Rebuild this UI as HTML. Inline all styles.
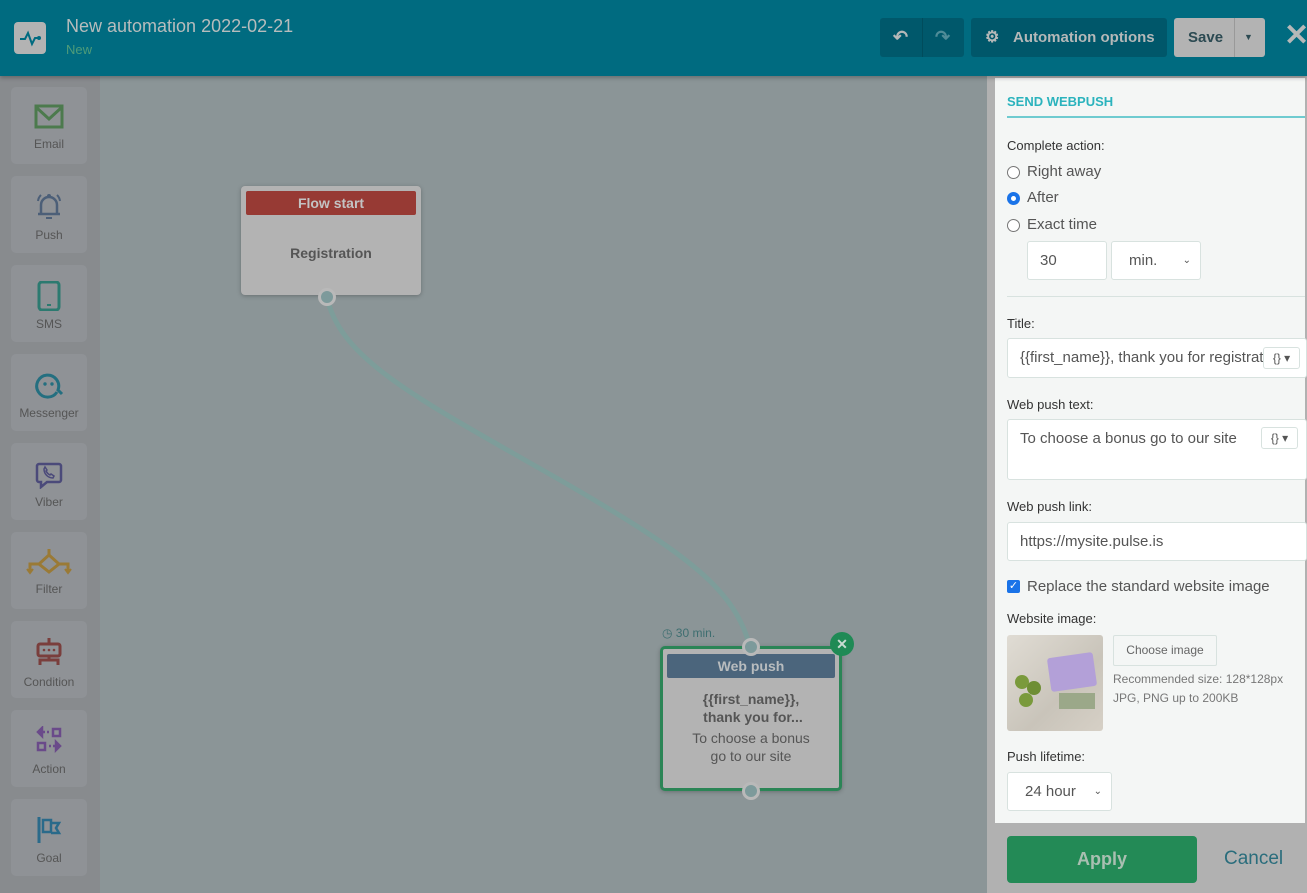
<!DOCTYPE html>
<html><head><meta charset="utf-8"><style>
*{box-sizing:border-box;margin:0;padding:0}
body{width:1307px;height:893px;overflow:hidden;font-family:"Liberation Sans",sans-serif;background:#8b9597;position:relative}
.hdr{position:absolute;left:0;top:0;width:1307px;height:76px;background:#006b80;box-shadow:0 2px 4px rgba(0,0,0,.25);z-index:5}
.logo{position:absolute;left:14px;top:22px;width:32px;height:32px;background:#b3b3b3;border-radius:4px}
.ttl{position:absolute;left:66px;top:16px;font-size:18px;color:#b7bcbc}
.sub{position:absolute;left:66px;top:42px;font-size:13px;color:#4f9c79}
.btn{position:absolute;top:18px;height:39px;border-radius:3px;background:#00576a;color:#b5b8b8;font-weight:bold;font-size:15px;line-height:39px}
.side{position:absolute;left:0;top:76px;width:100px;height:817px;background:#888b8e}
.tile{position:absolute;left:11px;width:76px;height:77px;background:#8f9296;border-radius:5px;text-align:center;font-size:12px;color:#555}
.tile svg{display:block;margin:16px auto 6px}
.node{position:absolute;background:#b3b3b3;border-radius:4px;box-shadow:0 1px 4px rgba(0,0,0,.25);text-align:center;color:#555}
.dot{position:absolute;width:18px;height:18px;border-radius:50%;background:#7d9a9b;border:3px solid #b9b9b9}
.panel{position:absolute;left:987px;top:76px;width:320px;height:817px;background:#b1b1b1}
.inner{position:absolute;left:995px;top:78px;width:310px;height:745px;background:#f4f6f5;font-size:15px;color:#555}
.lbl{position:absolute;left:12px;font-size:13px;color:#333}
.rad{position:absolute;left:12px;width:13px;height:13px;border:1px solid #767676;border-radius:50%;background:#fff}
.rt{position:absolute;left:32px;font-size:15px;color:#555}
.inp{position:absolute;background:#fff;border:1px solid #d8e2df;border-radius:3px;font-size:15px;color:#555;padding-left:12px}
.var{position:absolute;width:37px;height:22px;border:1px solid #d8e2df;border-radius:3px;background:#fff;font-size:12px;line-height:20px;text-align:center;color:#555}
</style></head><body>
<div class="hdr">
 <div class="logo"><svg width="32" height="32" viewBox="0 0 32 32"><path d="M6 17h5l3-6 4 11 3-6h4" fill="none" stroke="#006b80" stroke-width="2"/><circle cx="25" cy="16" r="2" fill="#006b80"/></svg></div>
 <div class="ttl">New automation 2022-02-21</div>
 <div class="sub">New</div>
 <div class="btn" style="left:880px;width:84px;background:#00586b"><span style="position:absolute;left:13px;font-size:18px">↶</span><span style="position:absolute;left:42px;top:0;height:39px;border-left:1px solid #004c5c"></span><span style="position:absolute;left:55px;font-size:18px;color:#4f8c98">↷</span></div>
 <div class="btn" style="left:971px;width:196px;padding-left:42px"><span style="position:absolute;left:14px;font-size:16px">⚙</span>Automation options</div>
 <div class="btn" style="left:1174px;width:91px;background:#b3b3b3;color:#2c4a52"><span style="position:absolute;left:14px">Save</span><span style="position:absolute;left:60px;top:0;height:39px;border-left:1px solid #999"></span><span style="position:absolute;left:70px;font-size:9px">▼</span></div>
 <div style="position:absolute;left:1284px;top:18px;font-size:30px;color:#b5b8b8;font-weight:bold">✕</div>
</div>
<div class="side">
 <div class="tile" style="top:11px"><svg width="30" height="28"><rect x="2" y="3" width="26" height="21" fill="none" stroke="#4c7a4d" stroke-width="3"/><path d="M3 5l12 11 12-11" fill="none" stroke="#4c7a4d" stroke-width="3"/></svg>Email</div>
 <div class="tile" style="top:100px"><svg width="32" height="30"><path d="M8 22V13a8 8 0 0116 0v9h3H5z" fill="none" stroke="#4c5f78" stroke-width="2.5"/><circle cx="16" cy="4" r="2" fill="#4c5f78"/><path d="M13 26h6" stroke="#4c5f78" stroke-width="2"/><path d="M5 9a10 10 0 013-6M27 9a10 10 0 00-3-6" fill="none" stroke="#4c5f78" stroke-width="2"/></svg>Push</div>
 <div class="tile" style="top:189px"><svg width="26" height="30"><rect x="3" y="1" width="20" height="28" rx="3" fill="none" stroke="#2c7a70" stroke-width="3"/><rect x="11" y="23" width="4" height="2" fill="#2c7a70"/></svg>SMS</div>
 <div class="tile" style="top:278px"><svg width="30" height="30"><path d="M23 22a11 11 0 111-2l4 4" fill="none" stroke="#246f80" stroke-width="3"/><circle cx="11" cy="14" r="1.7" fill="#246f80"/><circle cx="18" cy="14" r="1.7" fill="#246f80"/></svg>Messenger</div>
 <div class="tile" style="top:367px"><svg width="30" height="30"><path d="M5 5h20a2 2 0 012 2v14a2 2 0 01-2 2H13l-6 5v-5H5a2 2 0 01-2-2V7a2 2 0 012-2z" fill="none" stroke="#4b4a7a" stroke-width="2.5"/><path d="M10 10c0 5 4 9 9 9l1-2-3-2-1 1c-2-1-3-2-4-4l1-1-2-3z" fill="none" stroke="#4b4a7a" stroke-width="1.5"/></svg>Viber</div>
 <div class="tile" style="top:456px"><svg width="46" height="28"><path d="M23 1v6L13 16l10 8 10-8-10-9M13 16H4v7M33 16h9v7" fill="none" stroke="#9a7a36" stroke-width="3"/><path d="M1 21l3 4 3-4M39 21l3 4 3-4" fill="#9a7a36" stroke="#9a7a36" stroke-width="2"/></svg>Filter</div>
 <div class="tile" style="top:545px"><svg width="34" height="32"><path d="M17 1v5" stroke="#7a3e3c" stroke-width="3"/><rect x="6" y="7" width="22" height="12" rx="2" fill="none" stroke="#7a3e3c" stroke-width="3"/><circle cx="12" cy="13" r="1.3" fill="#7a3e3c"/><circle cx="17" cy="13" r="1.3" fill="#7a3e3c"/><circle cx="22" cy="13" r="1.3" fill="#7a3e3c"/><path d="M17 19v4H8v5M17 23h9v5" fill="none" stroke="#7a3e3c" stroke-width="3"/></svg>Condition</div>
 <div class="tile" style="top:634px"><svg width="30" height="30"><rect x="19" y="3" width="7" height="7" fill="none" stroke="#6a4a8a" stroke-width="2.5"/><path d="M4 6l4-4v8z M9 6h2M13 6h2" stroke="#6a4a8a" stroke-width="2.5" fill="#6a4a8a"/><rect x="4" y="17" width="7" height="7" fill="none" stroke="#6a4a8a" stroke-width="2.5"/><path d="M26 20l-4-4v8z M15 20h2M19 20h2" stroke="#6a4a8a" stroke-width="2.5" fill="#6a4a8a"/></svg>Action</div>
 <div class="tile" style="top:723px"><svg width="30" height="30"><path d="M5 2v26" stroke="#2a6a8a" stroke-width="3"/><path d="M9 5h8v12H9zM17 8h8l-3 5 3 5h-8" fill="none" stroke="#2a6a8a" stroke-width="2.5"/></svg>Goal</div>
</div>
<svg style="position:absolute;left:0;top:0" width="1000" height="893"><path d="M327 297C340 360 420 400 560 480 690 555 735 590 750 647" fill="none" stroke="#7d9d9a" stroke-width="5"/></svg>
<div class="node" style="left:241px;top:186px;width:180px;height:109px">
 <div style="margin:5px 5px 0;height:24px;background:#973a34;border-radius:2px;color:#c3c3c3;font-weight:bold;font-size:14px;line-height:24px">Flow start</div>
 <div style="margin-top:30px;font-weight:bold;font-size:14px">Registration</div>
</div>
<div class="dot" style="left:318px;top:288px"></div>
<div style="position:absolute;left:662px;top:626px;font-size:12px;color:#3e6e70">◷ 30 min.</div>
<div class="node" style="left:660px;top:646px;width:182px;height:145px;border:3px solid #2b8556;border-radius:5px">
 <div style="margin:5px 4px 0;height:24px;background:#4b657c;border-radius:2px;color:#b8bcbe;font-weight:bold;font-size:14px;line-height:24px">Web push</div>
 <div style="margin-top:12px;font-weight:bold;font-size:14px;line-height:18px;color:#555">{{first_name}},<br>&nbsp;thank you for...</div>
 <div style="margin-top:3px;font-size:14px;line-height:18px;color:#555">To choose a bonus<br>go to our site</div>
</div>
<div class="dot" style="left:742px;top:638px"></div>
<div class="dot" style="left:742px;top:782px;background:#7d9a9b"></div>
<div style="position:absolute;left:830px;top:632px;width:24px;height:24px;border-radius:50%;background:#1f8a55;color:#c9dcd2;font-size:14px;line-height:24px;text-align:center;font-weight:bold">✕</div>
<div class="panel"></div>
<div class="inner">
 <div style="position:absolute;left:12px;top:16px;font-size:13px;font-weight:bold;color:#2bb3bd">SEND WEBPUSH</div>
 <div style="position:absolute;left:12px;top:38px;width:298px;height:2px;background:#6fcbd0"></div>
 <div class="lbl" style="top:60px">Complete action:</div>
 <div class="rad" style="top:88px"></div><div class="rt" style="top:85px">Right away</div>
 <div class="rad" style="top:114px;border:4px solid #1a73e8"></div><div class="rt" style="top:111px">After</div>
 <div class="rad" style="top:141px"></div><div class="rt" style="top:138px">Exact time</div>
 <div class="inp" style="left:32px;top:163px;width:80px;height:39px;line-height:37px">30</div>
 <div class="inp" style="left:116px;top:163px;width:90px;height:39px;line-height:37px;padding-left:17px">min.<span style="position:absolute;right:9px;font-size:10px">⌄</span></div>
 <div style="position:absolute;left:12px;top:218px;width:298px;height:1px;background:#d8e2df"></div>
 <div class="lbl" style="top:238px">Title:</div>
 <div class="inp" style="left:12px;top:260px;width:300px;height:40px;line-height:38px;overflow:hidden;white-space:nowrap">{{first_name}}, thank you for registrat</div>
 <div class="var" style="left:268px;top:269px">{} ▾</div>
 <div class="lbl" style="top:319px">Web push text:</div>
 <div class="inp" style="left:12px;top:341px;width:300px;height:61px;padding-top:10px">To choose a bonus go to our site</div>
 <div class="var" style="left:266px;top:349px">{} ▾</div>
 <div class="lbl" style="top:421px">Web push link:</div>
 <div class="inp" style="left:12px;top:444px;width:300px;height:39px;line-height:37px">https://mysite.pulse.is</div>
 <div style="position:absolute;left:12px;top:502px;width:13px;height:13px;background:#1a73e8;border-radius:2px;color:#fff;font-size:11px;line-height:13px;text-align:center">✓</div>
 <div class="rt" style="top:500px">Replace the standard website image</div>
 <div class="lbl" style="top:533px">Website image:</div>
 <div style="position:absolute;left:12px;top:557px;width:96px;height:96px;border-radius:3px;background:linear-gradient(135deg,#e0dcd4,#c9c4ba 60%,#d6d0c6)">
  <div style="position:absolute;left:42px;top:20px;width:46px;height:34px;background:#b3a0d8;border-radius:3px;transform:rotate(-8deg)"></div>
  <div style="position:absolute;left:52px;top:58px;width:36px;height:16px;background:#9ba889"></div>
  <div style="position:absolute;left:8px;top:40px;width:14px;height:14px;border-radius:50%;background:#7a9a3c"></div>
  <div style="position:absolute;left:20px;top:46px;width:14px;height:14px;border-radius:50%;background:#6e8e34"></div>
  <div style="position:absolute;left:12px;top:58px;width:14px;height:14px;border-radius:50%;background:#7a9a3c"></div>
 </div>
 <div style="position:absolute;left:118px;top:557px;width:104px;height:31px;border:1px solid #d8e2df;border-radius:2px;font-size:12px;line-height:29px;text-align:center;color:#666">Choose image</div>
 <div style="position:absolute;left:118px;top:592px;font-size:12px;line-height:19px;color:#777">Recommended size: 128*128px<br>JPG, PNG up to 200KB</div>
 <div class="lbl" style="top:671px">Push lifetime:</div>
 <div class="inp" style="left:12px;top:694px;width:105px;height:39px;line-height:37px;padding-left:17px">24 hour<span style="position:absolute;right:9px;font-size:10px">⌄</span></div>
</div>
<div style="position:absolute;left:1007px;top:836px;width:190px;height:47px;background:#238a56;border-radius:4px;color:#a9bfb1;font-weight:bold;font-size:18px;line-height:47px;text-align:center">Apply</div>
<div style="position:absolute;left:1224px;top:848px;font-size:19px;color:#2a6d7c">Cancel</div>
</body></html>
